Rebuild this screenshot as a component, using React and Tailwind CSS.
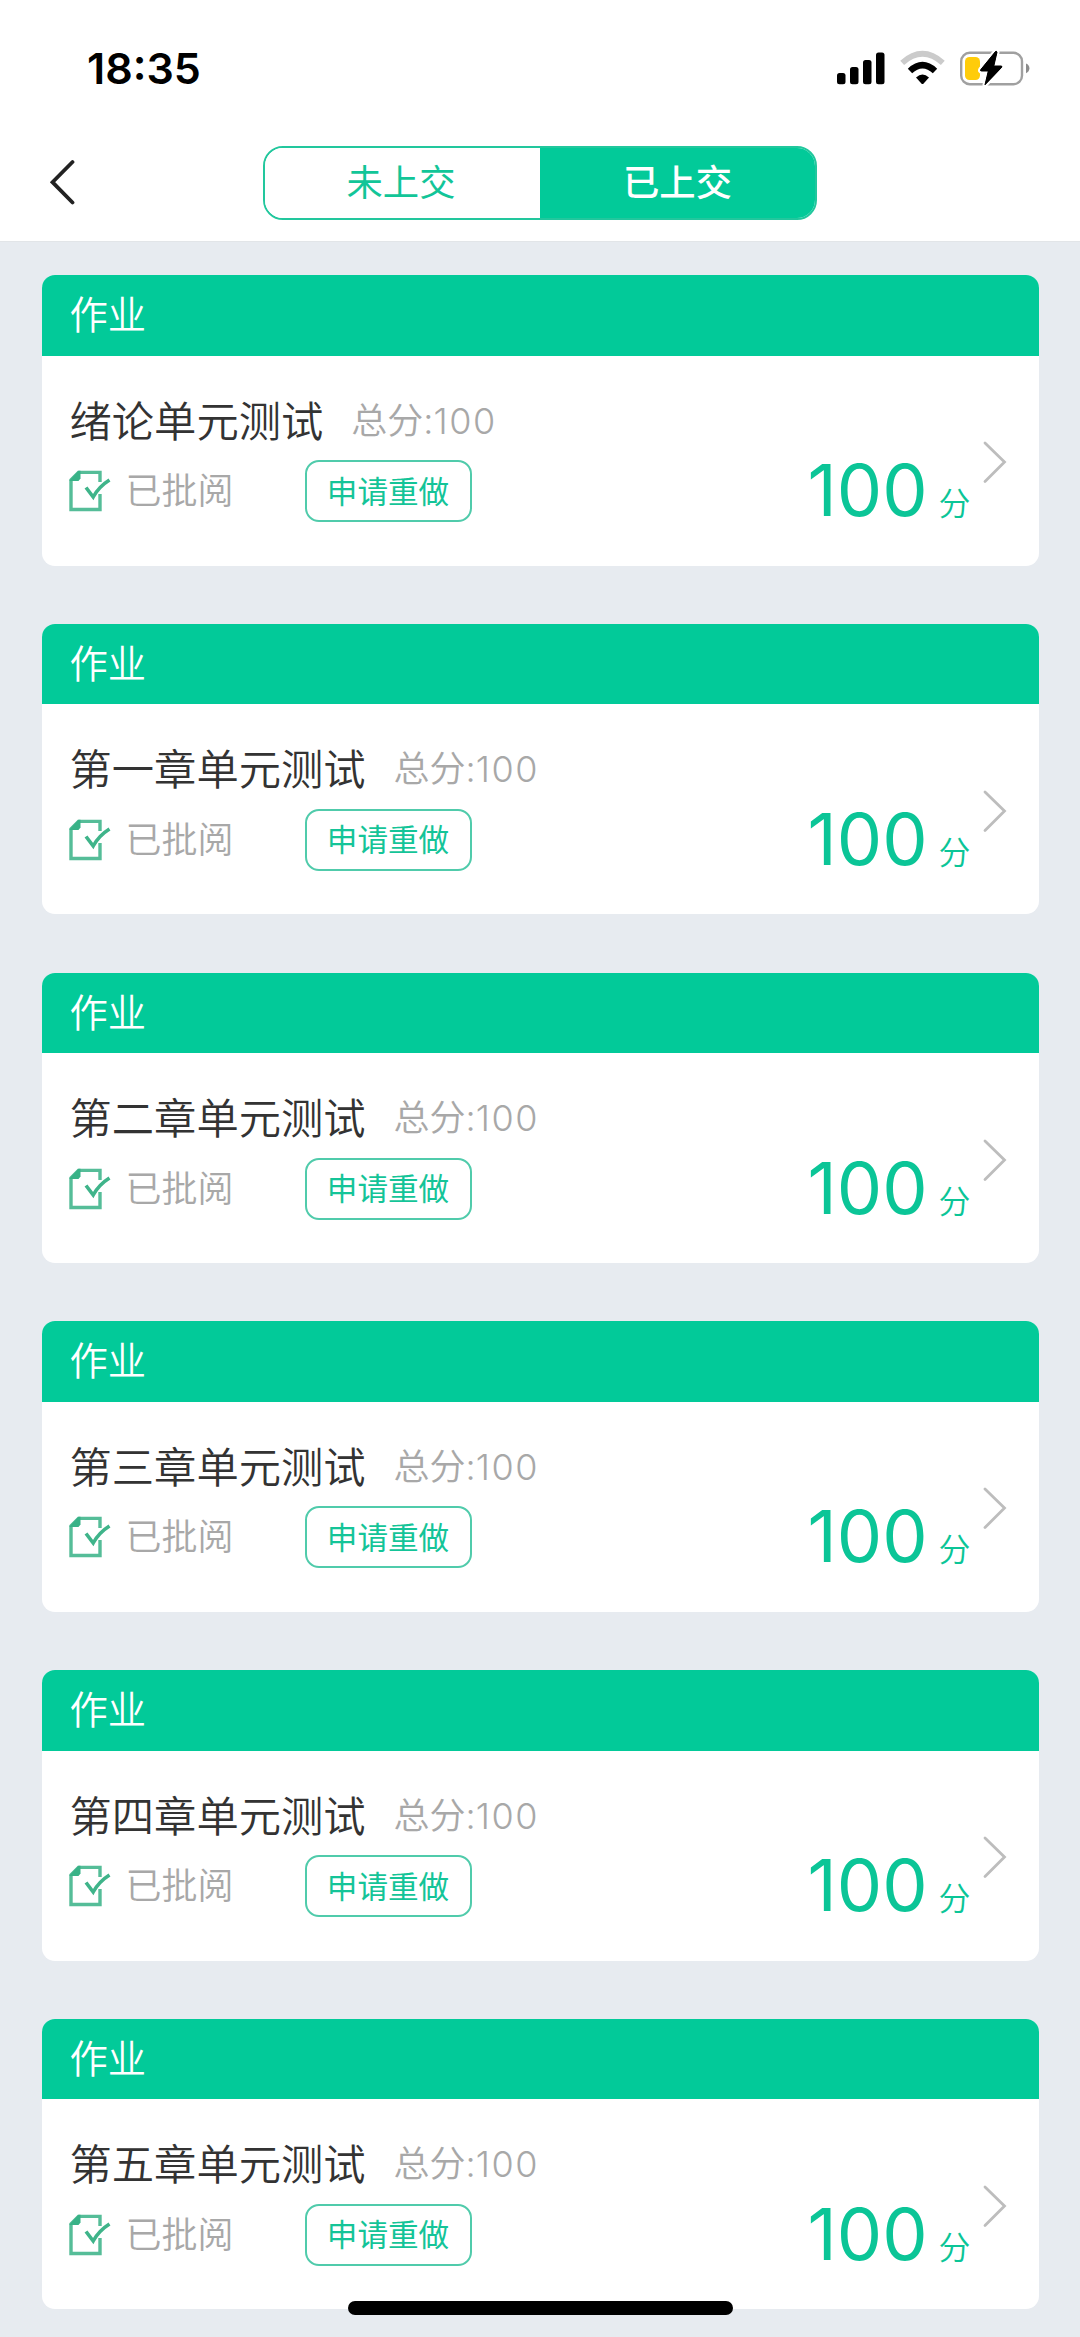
import { useState } from "react";

const assignments = [
  { id: 1, title: "绪论单元测试", total: 100, score: 100 },
  { id: 2, title: "第一章单元测试", total: 100, score: 100 },
  { id: 3, title: "第二章单元测试", total: 100, score: 100 },
  { id: 4, title: "第三章单元测试", total: 100, score: 100 },
  { id: 5, title: "第四章单元测试", total: 100, score: 100 },
  { id: 6, title: "第五章单元测试", total: 100, score: 100 },
];

const App = () => {
  const [tab, setTab] = useState("submitted");

  const tabClass = (name) =>
    name === tab
      ? "w-[277px] bg-[#02ca99] text-white font-medium"
      : "w-[277px] bg-white pr-[3px] text-[#12c598] font-normal";

  return (
    <div className="relative flex h-[2337px] w-[1080px] flex-col overflow-hidden bg-[#e7ebf0] font-['Inter','Noto_Sans_CJK_SC',sans-serif]">
      <StatusBar />

      {/* Navigation bar */}
      <div className="flex h-[118px] shrink-0 items-start border-b border-[#e2e5e8] bg-white pt-[22px] pl-[49px]">
        <button type="button" aria-label="返回" className="mt-[13px] w-[214px]">
          <svg width="28" height="46" viewBox="0 0 28 46" fill="none">
            <path d="M23.5 3L3.5 23.2L23.5 43.5" stroke="#222" strokeWidth="3.8" strokeLinecap="round" />
          </svg>
        </button>
        <div className="flex h-[74px] w-[554px] overflow-hidden rounded-[20px] border-2 border-[#22c79d] text-[36.3px] leading-[71px]">
          <button type="button" className={tabClass("pending")} onClick={() => setTab("pending")}>
            未上交
          </button>
          <button type="button" className={tabClass("submitted")} onClick={() => setTab("submitted")}>
            已上交
          </button>
        </div>
      </div>

      {/* Assignment list */}
      <div className="flex flex-col gap-[58.3px] pt-[33px] pr-[41.5px] pl-[41.5px]">
        {assignments.map((item) => (
          <AssignmentCard key={item.id} item={item} />
        ))}
      </div>

      {/* Home indicator */}
      <div className="absolute bottom-[22px] left-[348px] h-[14px] w-[385px] rounded-full bg-black" />
    </div>
  );
};

export default App;

function StatusBar() {
  return (
    <div className="flex h-[124px] shrink-0 justify-between bg-white pr-[49px] pl-[87px]">
      <div className="mt-[42px] text-[43px] leading-[53px] font-semibold">18:35</div>
      <div className="mt-[50px] flex h-[36px]">
        <svg width="48" height="36" viewBox="0 0 48 36">
          <rect x="0" y="23" width="8.5" height="11.3" rx="2.5" />
          <rect x="13" y="17" width="8.5" height="17.3" rx="2.5" />
          <rect x="26" y="10" width="8.5" height="24.3" rx="2.5" />
          <rect x="39" y="2.5" width="8.5" height="31.8" rx="2.5" />
        </svg>
        <svg className="ml-[15px]" width="46" height="36" viewBox="0 0 46 36" fill="none">
          <path d="M2.2 12.8Q22.5 -5.2 42.8 12.8" stroke="#cbcbcb" strokeWidth="5.8" />
          <path d="M10 21Q22.5 9.4 35 21" stroke="#000" strokeWidth="6.4" />
          <path d="M16 27.4Q22.5 21.6 29 27.4L23.6 33.4Q22.5 34.4 21.4 33.4Z" fill="#000" />
        </svg>
        <svg className="ml-[14px]" width="71" height="36" viewBox="0 0 71 36" fill="none">
          <rect x="1.2" y="2.8" width="60.8" height="31.4" rx="8.5" stroke="#a0a0a0" strokeWidth="2.4" />
          <path d="M66 13.4Q69.4 14.8 69.4 18.3Q69.4 21.8 66 23.2Z" fill="#8c8c8c" />
          <rect x="5" y="7" width="15" height="23" rx="4.5" fill="#ffcc0a" />
          <path
            d="M35.5 1.5L20.7 19.7Q20 21 21.5 21H28.3L25 34.8L41.6 17.4Q42.5 16 41 16H33.8L37 2.2Q36.6 .8 35.5 1.5Z"
            fill="#000"
            stroke="#fff"
            strokeWidth="5"
            strokeLinejoin="round"
            paintOrder="stroke"
          />
          <path
            d="M35.5 1.5L20.7 19.7Q20 21 21.5 21H28.3L25 34.8L41.6 17.4Q42.5 16 41 16H33.8L37 2.2Q36.6 .8 35.5 1.5Z"
            fill="#000"
            stroke="#000"
            strokeWidth="1"
            strokeLinejoin="round"
          />
        </svg>
      </div>
    </div>
  );
}

function AssignmentCard({ item }) {
  return (
    <div className="flex h-[290.5px] shrink-0 flex-col overflow-hidden rounded-[13px] bg-white">
      <div className="h-[80.5px] shrink-0 bg-[#02ca99] pl-[28px] text-[38.3px] leading-[80px] font-[350] text-white">
        作业
      </div>
      <div className="flex flex-1 pl-[27px]">
        <div className="flex w-[600px] flex-col pt-[41px]">
          <div className="flex h-[50px] items-center pl-px">
            <span className="text-[42.3px] leading-[50px] font-[350] text-[#333]">{item.title}</span>
            <span className="mb-px ml-[28px] text-[36px] leading-[49px] font-[350] text-[#a8a8a8]">
              总分:<span className="tracking-[1.6px]">{item.total}</span>
            </span>
          </div>
          <div className="mt-[13.5px] flex h-[62px] items-center">
            <ReviewedIcon />
            <span className="ml-[15px] w-[179px] text-[36px] leading-[50px] font-[350] text-[#a8a8a8]">已批阅</span>
            <button
              type="button"
              className="h-[62px] w-[167px] rounded-[14px] border-2 border-[#50cbab] text-[30.6px] leading-[57px] text-[#14c498]"
            >
              申请重做
            </button>
          </div>
        </div>
        <div className="flex flex-1 items-start pt-[94.5px] pl-[139px] text-[#0bc597]">
          <span className="w-[124px] text-[72px] leading-[80px]">{item.score}</span>
          <span className="mt-[36px] ml-[7px] text-[32px] leading-[36px] font-[350]">分</span>
        </div>
        <svg className="mt-[84.5px] mr-[30.5px] shrink-0" width="26" height="44" viewBox="0 0 26 44" fill="none">
          <path d="M3 3L22.5 22L3 41.5" stroke="#bdbdbd" strokeWidth="2.8" strokeLinecap="round" />
        </svg>
      </div>
    </div>
  );
}

function ReviewedIcon() {
  return (
    <svg width="42" height="42" viewBox="0 0 42 42" fill="none">
      <path d="M31 12V2.4H9.5L2 10V39.5H31V24" stroke="#55bd98" strokeWidth="3.4" />
      <path d="M.5 10.5L9.5 .8H11.5V8.5L9.5 11H.5Z" fill="#38b287" />
      <path d="M17 17.5L24.2 27Q30 16.5 40.5 10" stroke="#3fb48a" strokeWidth="3.6" />
    </svg>
  );
}
